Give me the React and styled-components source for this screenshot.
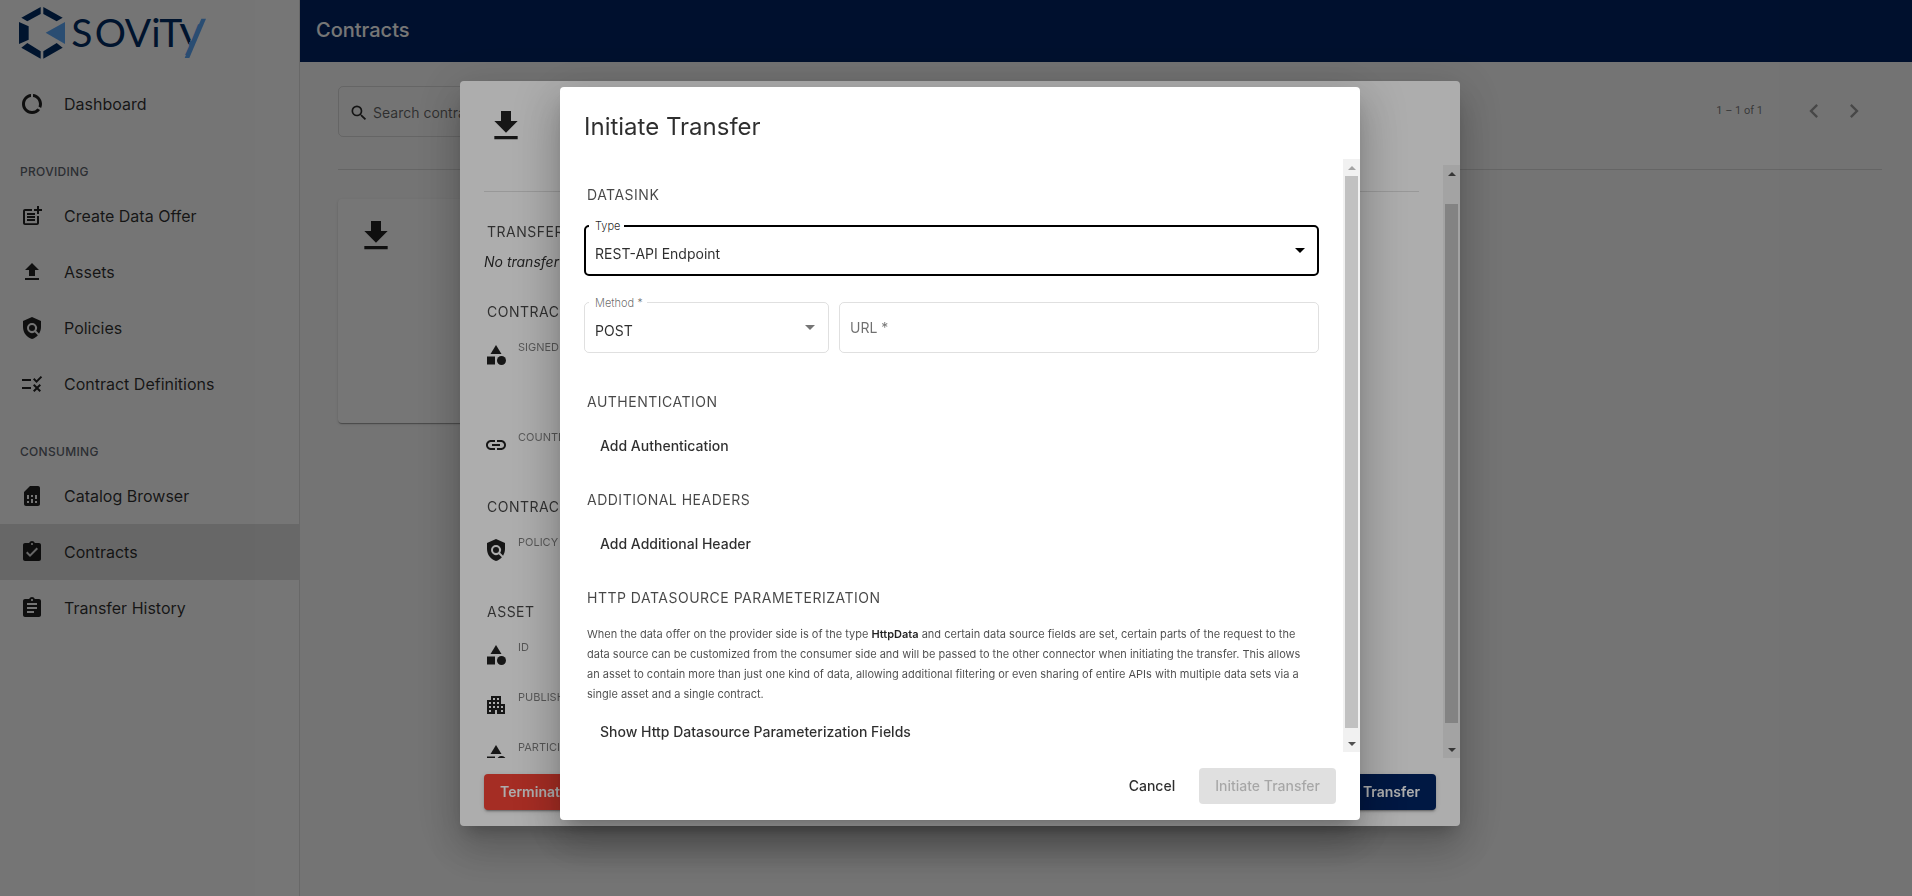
import React from "react";
import styled, { createGlobalStyle, css } from "styled-components";
import {
  MdApartment,
  MdAssignment,
  MdAssignmentTurnedIn,
  MdCategory,
  MdChevronLeft,
  MdChevronRight,
  MdDataUsage,
  MdDownload,
  MdLink,
  MdPolicy,
  MdPostAdd,
  MdRule,
  MdSearch,
  MdSimCard,
  MdUpload,
} from "react-icons/md";

const navy = "#002463";

const GlobalStyle = createGlobalStyle`
  *, *::before, *::after { box-sizing: border-box; }
  html, body { margin: 0; height: 100%; }
  body {
    overflow: hidden;
    background: #fafafa;
    color: rgba(0, 0, 0, 0.82);
    font-family: Inter, "Liberation Sans", sans-serif;
    font-size: 14px;
    font-weight: 400;
    line-height: 20px;
  }
  h1, h2, h3, p, ul, dl, dd { margin: 0; padding: 0; font-weight: inherit; }
  button, input, select { font: inherit; color: inherit; }
`;

/* ---------- Page shell ---------- */

const Shell = styled.div`
  display: flex;
  min-height: 100vh;
`;

const Sidebar = styled.aside`
  flex: 0 0 300px;
  background: #fff;
  border-right: 1px solid rgba(0, 0, 0, 0.12);
`;

const LogoLink = styled.a`
  display: block;
  height: 76px;
  padding: 7px 19px;

  svg {
    overflow: visible;
  }
`;

const NavTitle = styled.h2`
  height: 56px;
  padding: 30px 20px 6px;
  color: #5f6670;
  font-size: 12px;
  font-weight: 500;
  letter-spacing: 0.3px;
  text-transform: uppercase;
`;

const NavLink = styled.a`
  display: flex;
  align-items: center;
  gap: 20px;
  height: 56px;
  padding: 0 20px;
  color: inherit;
  font-size: 16px;
  text-decoration: none;
  background: ${(p) => (p.$active ? "rgba(0, 0, 0, 0.12)" : "transparent")};

  svg {
    width: 24px;
    height: 24px;
    color: rgba(0, 0, 0, 0.87);
  }
`;

const Main = styled.main`
  flex: 1;
  min-width: 0;
`;

const TopBar = styled.header`
  display: flex;
  align-items: center;
  height: 62px;
  padding: 0 16px 2px;
  background: ${navy};
  color: #fff;

  h1 {
    font-size: 20px;
    font-weight: 500;
    line-height: 24px;
  }
`;

const Content = styled.div`
  padding: 24px 30px 24px 38px;
`;

const Toolbar = styled.div`
  display: flex;
  align-items: center;
  justify-content: space-between;
  padding-bottom: 32px;
  border-bottom: 1px solid rgba(0, 0, 0, 0.12);
`;

const SearchBox = styled.label`
  display: flex;
  align-items: center;
  gap: 4px;
  width: 400px;
  height: 51px;
  padding: 2px 10px 0;
  border: 1px solid rgba(0, 0, 0, 0.12);
  border-radius: 5px;

  svg {
    width: 20px;
    height: 20px;
  }

  input {
    flex: 1;
    min-width: 0;
    padding: 0;
    border: 0;
    outline: 0;
    background: none;
  }

  input::placeholder {
    color: rgba(0, 0, 0, 0.6);
    opacity: 1;
  }
`;

const Paginator = styled.div`
  display: flex;
  align-items: center;
  padding: 0 8px 2px 0;
  color: rgba(0, 0, 0, 0.54);
  font-family: Roboto, sans-serif;
  font-size: 11px;

  span {
    margin-right: 31px;
  }
`;

const PageButton = styled.button`
  display: flex;
  align-items: center;
  justify-content: center;
  width: 40px;
  height: 40px;
  padding: 0;
  border: 0;
  background: none;
  color: rgba(0, 0, 0, 0.38);

  svg {
    width: 28px;
    height: 28px;
  }
`;

const CardGrid = styled.div`
  display: grid;
  grid-template-columns: repeat(auto-fill, minmax(340px, 1fr));
  gap: 20px;
  padding-top: 29px;
`;

const Card = styled.article`
  height: 224px;
  padding: 16px;
  border-radius: 4px;
  background: #fff;
  box-shadow: 0 2px 1px -1px rgba(0, 0, 0, 0.2), 0 1px 1px rgba(0, 0, 0, 0.14),
    0 1px 3px rgba(0, 0, 0, 0.12);
`;

const Avatar = styled.div`
  display: flex;
  align-items: center;
  justify-content: center;
  width: 44px;
  height: 42px;

  svg {
    width: 40px;
    height: 40px;
    color: rgba(0, 0, 0, 0.87);
  }
`;

/* ---------- Dialogs ---------- */

const Overlay = styled.div`
  position: fixed;
  inset: 0;
  display: flex;
  align-items: center;
  justify-content: center;
  padding: 11px 0 0 8px;
  background: rgba(0, 0, 0, 0.32);
`;

const Dialog = styled.section`
  display: flex;
  flex-direction: column;
  width: ${(p) => (p.$wide ? "1000px" : "800px")};
  max-width: 80vw;
  border-radius: 4px;
  background: #fff;
  box-shadow: 0 11px 15px -7px rgba(0, 0, 0, 0.2),
    0 24px 38px 3px rgba(0, 0, 0, 0.14), 0 9px 46px 8px rgba(0, 0, 0, 0.12);
`;

const DetailHeader = styled.header`
  height: 84px;
  padding: 24px;
`;

const DialogTitle = styled.h2`
  height: 72px;
  padding: 24px 24px 16px;
  font-size: 24px;
  line-height: 32px;
`;

const DialogBody = styled.div`
  display: flex;
  height: calc(100vh - 303px);
`;

const Scrollport = styled.div`
  flex: 1;
  min-width: 0;
  overflow: hidden;
  padding: 0 24px;
`;

const DialogActions = styled.footer`
  display: flex;
  align-items: center;
  justify-content: ${(p) => (p.$split ? "space-between" : "flex-end")};
  gap: 8px;
  padding: 16px 24px;
`;

const Track = styled.div`
  flex: 0 0 17px;
  display: flex;
  flex-direction: column;
  background: #f1f1f1;
`;

const TrackArrow = styled.div`
  display: flex;
  align-items: center;
  justify-content: center;
  height: 17px;
  color: ${(p) => (p.$disabled ? "#a3a3a3" : "#505050")};
`;

const TrackGap = styled.div`
  flex: ${(p) => p.$size} 1 0;
`;

const Thumb = styled.div`
  flex: ${(p) => p.$size} 1 0;
  margin: 0 2px;
  background: #c1c1c1;
`;

const raised = css`
  color: #fff;
  font-weight: 600;
  box-shadow: 0 3px 1px -2px rgba(0, 0, 0, 0.2), 0 2px 2px rgba(0, 0, 0, 0.14),
    0 1px 5px rgba(0, 0, 0, 0.12);
`;

const buttonTones = {
  plain: css`
    background: none;
  `,
  danger: css`
    ${raised}
    background: #f44336;
  `,
  primary: css`
    ${raised}
    background: ${navy};
  `,
  disabled: css`
    background: rgba(0, 0, 0, 0.12);
    color: rgba(0, 0, 0, 0.26);
  `,
};

const Button = styled.button`
  height: 36px;
  padding: 0 16px;
  border: 0;
  border-radius: 4px;
  font-size: 14px;
  font-weight: 500;
  line-height: 20px;
  white-space: nowrap;
  ${(p) => buttonTones[p.$tone || "plain"]}
`;

const SectionTitle = styled.h3`
  padding-left: 3px;
  color: rgba(0, 0, 0, 0.72);
  font-size: 14px;
  line-height: 20px;
  letter-spacing: 0.5px;
  text-transform: uppercase;
  white-space: nowrap;
`;

/* ---------- Contract details ---------- */

const DetailSection = styled.section`
  display: flex;
  flex-direction: column;
  gap: ${(p) => (p.$tight ? "10px" : "16px")};
  padding-bottom: ${(p) => (p.$tight ? "30px" : "19px")};

  &:first-of-type {
    margin-top: 26px;
    padding-top: 30px;
    border-top: 1px solid rgba(0, 0, 0, 0.12);
  }
`;

const EmptyNote = styled.p`
  font-style: italic;
`;

const PropertyList = styled.dl`
  display: flex;
  flex-direction: column;
`;

const Property = styled.div`
  display: flex;
  gap: 10px;
  height: ${(p) => (p.$tall ? "90px" : "50px")};

  svg {
    width: 24px;
    height: 24px;
    margin-top: 5px;
    color: rgba(0, 0, 0, 0.87);
  }

  dt {
    color: rgba(0, 0, 0, 0.5);
    font-size: 11px;
    line-height: 18px;
    text-transform: uppercase;
    white-space: nowrap;
  }
`;

/* ---------- Transfer form ---------- */

const Form = styled.form`
  display: flex;
  flex-direction: column;
  padding-top: 26px;
`;

const FieldRow = styled.div`
  display: flex;
  gap: 10px;
  margin-top: ${(p) => (p.$first ? "20px" : "26px")};
`;

const Field = styled.div`
  position: relative;
  flex: ${(p) => (p.$third ? "0 0 calc(100% / 3)" : "1")};
  min-width: 0;
  height: 51px;

  label {
    position: absolute;
    top: -8px;
    left: 5px;
    padding: 0 4px 0 6px;
    background: #fff;
    color: ${(p) => (p.$focused ? "rgba(0, 0, 0, 0.87)" : "rgba(0, 0, 0, 0.6)")};
    font-size: 11px;
    font-weight: 300;
    line-height: 18px;
  }

  > svg {
    position: absolute;
    top: 23px;
    right: 14px;
    color: ${(p) => (p.$focused ? "#000" : "rgba(0, 0, 0, 0.54)")};
    pointer-events: none;
  }
`;

const control = css`
  width: 100%;
  height: 100%;
  border: 1px solid rgba(0, 0, 0, 0.12);
  border-radius: 5px;
  outline: 0;
  background: none;
`;

const Select = styled.select`
  ${control}
  appearance: none;
  padding: 7px 10px 0;
  ${(p) =>
    p.$focused &&
    css`
      padding: 7px 9px 0;
      border: 2px solid #000;
    `}
`;

const TextInput = styled.input`
  ${control}
  padding: 0 10px;

  &::placeholder {
    color: rgba(0, 0, 0, 0.56);
    opacity: 1;
  }
`;

const Hint = styled.p`
  margin-top: 16px;
  padding: 0 3px;
  color: rgba(0, 0, 0, 0.7);
  font-size: 11px;
  line-height: 20px;

  strong {
    color: rgba(0, 0, 0, 0.87);
    font-weight: 600;
  }
`;

const FormSection = styled.section`
  display: flex;
  flex-direction: column;
  align-items: flex-start;
  margin-top: ${(p) => (p.$first ? "39px" : "26px")};

  ${Button} {
    margin-top: 16px;
  }

  ${Hint} + ${Button} {
    margin-top: 10px;
  }
`;

function Logo() {
  return (
    <svg width="187" height="52" viewBox="57 21 561 156" role="img" aria-label="sovity">
      <defs>
        <linearGradient id="split" gradientUnits="userSpaceOnUse" x1="539" y1="31" x2="657" y2="81">
          <stop offset="0.5" stopColor="#002d65" />
          <stop offset="0.5" stopColor="#5da9f8" />
        </linearGradient>
      </defs>
      <g fill="#002d65">
        <path d="M122 21V42L82 64L64 53Z" />
        <path d="M130 21L188 53L170 64L130 42Z" />
        <path d="M57 66L86 79V119L57 132Z" />
        <path d="M64 143L82 129L122 154V176Z" />
        <path d="M130 154L170 129L188 143L130 176Z" />
        <text x="214 284 374 454 478" y="141" fontFamily="Lato, sans-serif" fontSize="117" fontWeight="400">
          SOViT
        </text>
      </g>
      <text x="538" y="141" fontFamily="Lato, sans-serif" fontSize="135" fontWeight="400" fill="url(#split)">
        y
      </text>
      <path d="M137 98L195 66V132Z" fill="#5da9f8" />
      <path d="M604 56H618L568 174H554Z" fill="#5da9f8" />
    </svg>
  );
}

function Caret({ up = false, width = 10, height = 5 }) {
  return (
    <svg width={width} height={height} viewBox="0 0 10 5" fill="currentColor" aria-hidden="true">
      <path d={up ? "M0 5L5 0L10 5Z" : "M0 0L5 5L10 0Z"} />
    </svg>
  );
}

function Scrollbar({ before, thumb, after }) {
  return (
    <Track aria-hidden="true">
      <TrackArrow $disabled={before === 0}>
        <Caret up width={8} height={4} />
      </TrackArrow>
      <TrackGap $size={before} />
      <Thumb $size={thumb} />
      <TrackGap $size={after} />
      <TrackArrow>
        <Caret width={8} height={4} />
      </TrackArrow>
    </Track>
  );
}

function NavItem({ icon: Icon, active, children }) {
  return (
    <NavLink href="#" $active={active} aria-current={active ? "page" : undefined}>
      <Icon aria-hidden="true" />
      {children}
    </NavLink>
  );
}

function PropertyItem({ icon: Icon, label, tall }) {
  return (
    <Property $tall={tall}>
      <Icon aria-hidden="true" />
      <dt>{label}</dt>
    </Property>
  );
}

function ContractsPage() {
  return (
    <Shell>
      <Sidebar>
        <LogoLink href="#">
          <Logo />
        </LogoLink>
        <nav>
          <NavItem icon={MdDataUsage}>Dashboard</NavItem>
          <NavTitle>Providing</NavTitle>
          <NavItem icon={MdPostAdd}>Create Data Offer</NavItem>
          <NavItem icon={MdUpload}>Assets</NavItem>
          <NavItem icon={MdPolicy}>Policies</NavItem>
          <NavItem icon={MdRule}>Contract Definitions</NavItem>
          <NavTitle>Consuming</NavTitle>
          <NavItem icon={MdSimCard}>Catalog Browser</NavItem>
          <NavItem icon={MdAssignmentTurnedIn} active>
            Contracts
          </NavItem>
          <NavItem icon={MdAssignment}>Transfer History</NavItem>
        </nav>
      </Sidebar>
      <Main>
        <TopBar>
          <h1>Contracts</h1>
        </TopBar>
        <Content>
          <Toolbar>
            <SearchBox>
              <MdSearch aria-hidden="true" />
              <input type="search" placeholder="Search contracts" aria-label="Search contracts" />
            </SearchBox>
            <Paginator>
              <span>1 – 1 of 1</span>
              <PageButton type="button" aria-label="Previous page" disabled>
                <MdChevronLeft />
              </PageButton>
              <PageButton type="button" aria-label="Next page" disabled>
                <MdChevronRight />
              </PageButton>
            </Paginator>
          </Toolbar>
          <CardGrid>
            <Card>
              <Avatar>
                <MdDownload />
              </Avatar>
            </Card>
          </CardGrid>
        </Content>
      </Main>
    </Shell>
  );
}

function ContractDialog() {
  return (
    <Overlay>
      <Dialog $wide role="dialog" aria-label="Contract details">
        <DetailHeader>
          <Avatar>
            <MdDownload />
          </Avatar>
        </DetailHeader>
        <DialogBody>
          <Scrollport>
            <DetailSection $tight>
              <SectionTitle>Transfer History</SectionTitle>
              <EmptyNote>No transfer yet.</EmptyNote>
            </DetailSection>
            <DetailSection>
              <SectionTitle>Contract Agreement</SectionTitle>
              <PropertyList>
                <PropertyItem icon={MdCategory} label="Signed" tall />
                <PropertyItem icon={MdLink} label="Counter-Party" />
              </PropertyList>
            </DetailSection>
            <DetailSection>
              <SectionTitle>Contract Policy</SectionTitle>
              <PropertyList>
                <PropertyItem icon={MdPolicy} label="Policy" />
              </PropertyList>
            </DetailSection>
            <DetailSection>
              <SectionTitle>Asset</SectionTitle>
              <PropertyList>
                <PropertyItem icon={MdCategory} label="ID" />
                <PropertyItem icon={MdApartment} label="Publisher" />
                <PropertyItem icon={MdCategory} label="Participant ID" />
              </PropertyList>
            </DetailSection>
          </Scrollport>
          <Scrollbar before={22} thumb={519} after={18} />
        </DialogBody>
        <DialogActions $split>
          <Button type="button" $tone="danger">
            Terminate
          </Button>
          <Button type="button" $tone="primary">
            Transfer
          </Button>
        </DialogActions>
      </Dialog>
    </Overlay>
  );
}

function TransferDialog() {
  return (
    <Overlay>
      <Dialog role="dialog" aria-modal="true" aria-labelledby="transfer-title">
        <DialogTitle id="transfer-title">Initiate Transfer</DialogTitle>
        <DialogBody>
          <Scrollport>
            <Form>
              <SectionTitle>Datasink</SectionTitle>
              <FieldRow $first>
                <Field $focused>
                  <Select id="type" $focused defaultValue="rest">
                    <option value="rest">REST-API Endpoint</option>
                  </Select>
                  <label htmlFor="type">Type</label>
                  <Caret />
                </Field>
              </FieldRow>
              <FieldRow>
                <Field $third>
                  <Select id="method" defaultValue="POST">
                    <option>POST</option>
                  </Select>
                  <label htmlFor="method">Method *</label>
                  <Caret />
                </Field>
                <Field>
                  <TextInput id="url" type="url" placeholder="URL *" aria-label="URL" required />
                </Field>
              </FieldRow>
              <FormSection $first>
                <SectionTitle>Authentication</SectionTitle>
                <Button type="button">Add Authentication</Button>
              </FormSection>
              <FormSection>
                <SectionTitle>Additional Headers</SectionTitle>
                <Button type="button">Add Additional Header</Button>
              </FormSection>
              <FormSection>
                <SectionTitle>HTTP Datasource Parameterization</SectionTitle>
                <Hint>
                  When the data offer on the provider side is of the type <strong>HttpData</strong> and
                  certain data source fields are set, certain parts of the request to the data source
                  can be customized from the consumer side and will be passed to the other connector
                  when initiating the transfer. This allows an asset to contain more than just one kind
                  of data, allowing additional filtering or even sharing of entire APIs with multiple
                  data sets via a single asset and a single contract.
                </Hint>
                <Button type="button">Show Http Datasource Parameterization Fields</Button>
              </FormSection>
            </Form>
          </Scrollport>
          <Scrollbar before={0} thumb={552} after={7} />
        </DialogBody>
        <DialogActions>
          <Button type="button">Cancel</Button>
          <Button type="button" $tone="disabled" disabled>
            Initiate Transfer
          </Button>
        </DialogActions>
      </Dialog>
    </Overlay>
  );
}

export default function App() {
  return (
    <>
      <GlobalStyle />
      <ContractsPage />
      <ContractDialog />
      <TransferDialog />
    </>
  );
}
